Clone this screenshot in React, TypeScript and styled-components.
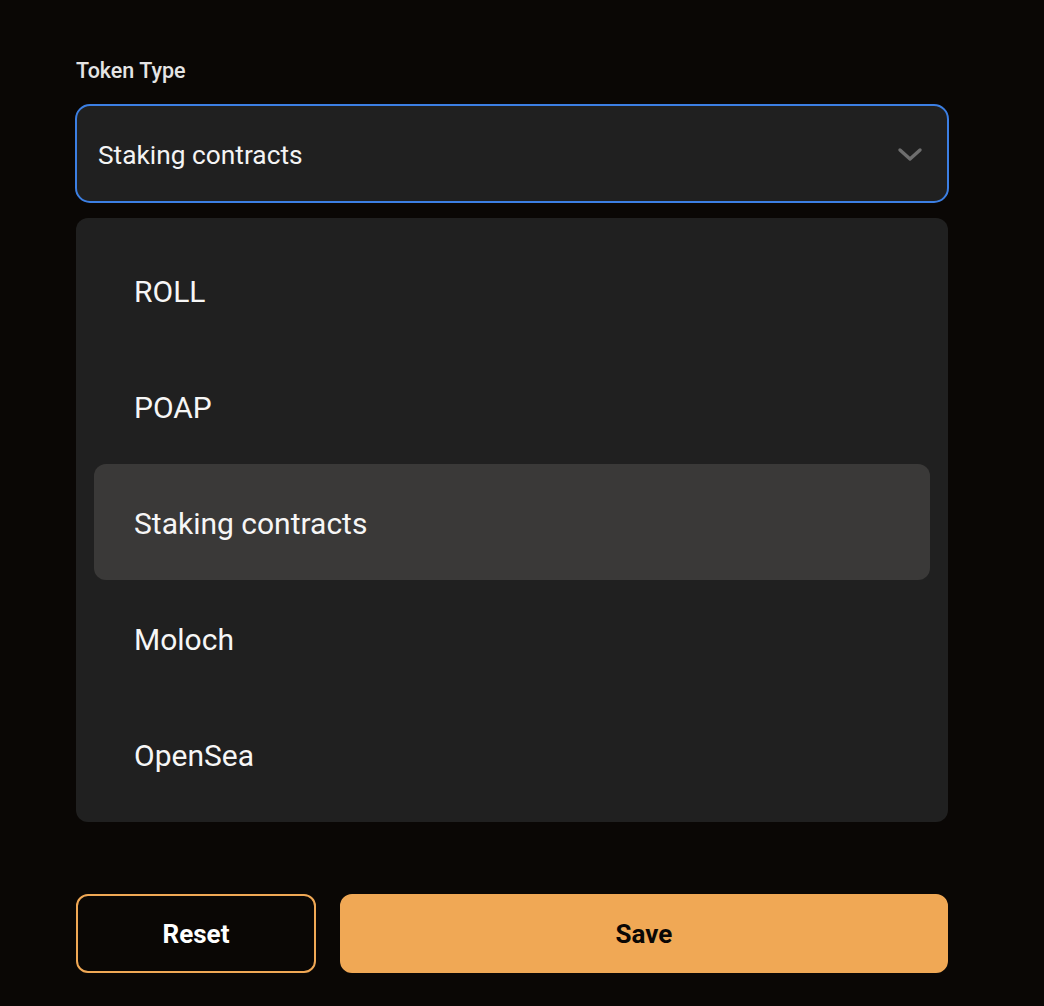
import React from "react";
import styled, { createGlobalStyle } from "styled-components";

const Global = createGlobalStyle`
  html, body { margin: 0; padding: 0; background: #0a0705; }
  body { font-family: "Roboto", "Noto Sans", sans-serif; color: #f2f2f2; }
  * { box-sizing: border-box; }
`;

const Page = styled.div`
  width: 1044px;
  height: 1006px;
  background: #0a0705;
  padding: 57px 96px 0 76px;
`;

const Label = styled.div`
  font-size: 21.5px;
  font-weight: 500;
  color: #e4e4e4;
  line-height: 28px;
  height: 28px;
  margin-bottom: 19px;
`;

const SelectBox = styled.div`
  margin: 0 -1px;
  height: 99px;
  border: 2px solid #3c7fe3;
  border-radius: 15px;
  background: #202020;
  display: flex;
  align-items: center;
  justify-content: space-between;
  padding: 3px 24px 0 21px;
  font-size: 26.3px;
  color: #f4f4f4;
`;

const Menu = styled.ul`
  list-style: none;
  margin: 15px 0 0;
  padding: 14px 18px 10px;
  background: #202020;
  border-radius: 12px;
  height: 604px;
`;

const Item = styled.li<{ $active?: boolean }>`
  height: 116px;
  display: flex;
  align-items: center;
  padding: 2px 0 0 40px;
  border-radius: 12px;
  font-size: 30px;
  color: #f6f6f6;
  background: ${(p) => (p.$active ? "#3a3938" : "transparent")};
`;

const Actions = styled.div`
  display: grid;
  grid-template-columns: 240px 1fr;
  gap: 24px;
  margin-top: 72px;
`;

const Button = styled.button<{ $primary?: boolean }>`
  height: 79px;
  border-radius: 12px;
  font-family: inherit;
  font-size: 26px;
  font-weight: 700;
  cursor: pointer;
  border: 2px solid #f0a855;
  background: ${(p) => (p.$primary ? "#f0a855" : "transparent")};
  color: ${(p) => (p.$primary ? "#0a0705" : "#ffffff")};
`;

const Chevron = () => (
  <svg width="26" height="16" viewBox="0 0 26 16" fill="none">
    <path d="M3 3l10 9 10-9" stroke="#6e6e6e" strokeWidth="3.4" strokeLinecap="round" strokeLinejoin="round" />
  </svg>
);

const options = ["ROLL", "POAP", "Staking contracts", "Moloch", "OpenSea"];

export default function App() {
  const selected = "Staking contracts";
  return (
    <>
      <Global />
      <Page>
        <Label>Token Type</Label>
        <SelectBox>
          <span>{selected}</span>
          <Chevron />
        </SelectBox>
        <Menu>
          {options.map((o) => (
            <Item key={o} $active={o === selected}>
              {o}
            </Item>
          ))}
        </Menu>
        <Actions>
          <Button>Reset</Button>
          <Button $primary>Save</Button>
        </Actions>
      </Page>
    </>
  );
}
